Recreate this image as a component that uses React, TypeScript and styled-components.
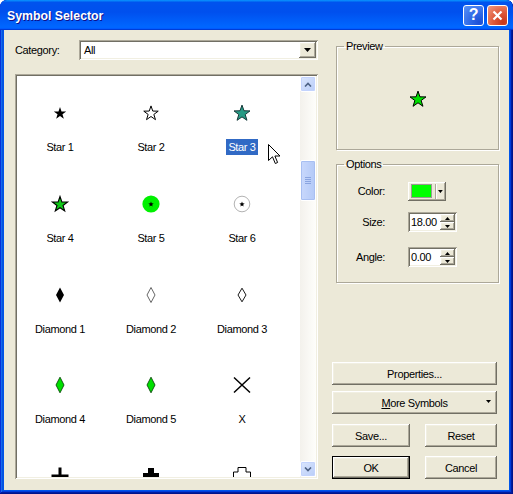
import React from 'react';
import styled, { createGlobalStyle, css } from 'styled-components';

const GlobalStyle = createGlobalStyle`
    html, body {
        margin: 0;
        padding: 0;
        background: #ffffff;
    }
    body {
        font-family: "Liberation Sans", Arial, sans-serif;
        font-size: 11px;
        letter-spacing: -0.35px;
        color: #000;
    }
`;

// classic 3D borders used by the controls inside the dialog
const raised = css`
    background: #ece9d8;
    border: none;
    box-shadow: inset -1px -1px #716f64, inset 1px 1px #ffffff, inset -2px -2px #aca899, inset 2px 2px #f1efe2;
`;

const sunken = css`
    background: #ffffff;
    box-shadow: inset 1px 1px #aca899, inset -1px -1px #ffffff, inset 2px 2px #716f64, inset -2px -2px #f1efe2;
`;

const Window = styled.div`
    width: 513px;
    height: 494px;
    box-sizing: border-box;
    display: flex;
    flex-direction: column;
    background: #0055ea;
    border-radius: 7px 7px 0 0;
    overflow: hidden;
    box-shadow: inset -1px -1px #00138c, inset 1px 1px #0831d9, inset -2px -2px #001ea0, inset 2px 2px #166aee,
        inset -3px -3px #003bda, inset 3px 3px #0855dd;
`;

const TitleBar = styled.div`
    height: 30px;
    flex: none;
    display: flex;
    align-items: center;
    padding: 0 5px 0 7px;
    box-sizing: border-box;
    background: linear-gradient(
        180deg,
        #0997ff,
        #0053ee 8%,
        #0050ee 40%,
        #0066ff 88%,
        #0066ff 93%,
        #005bff 95%,
        #003dd7 96%,
        #003dd7
    );
    border-radius: 7px 7px 0 0;
`;

const TitleText = styled.div`
    flex: 1;
    color: #ffffff;
    font-weight: bold;
    font-size: 12.3px;
    letter-spacing: 0;
    padding-top: 2px;
    text-shadow: 1px 1px #0f1089;
`;

const TitleButton = styled.div<{ $variant: 'help' | 'close' }>`
    width: 21px;
    height: 21px;
    box-sizing: border-box;
    margin-left: 3px;
    border: 1px solid #ffffff;
    border-radius: 3px;
    display: flex;
    align-items: center;
    justify-content: center;
    color: #ffffff;
    font-weight: bold;
    font-size: 16px;
    ${(props) =>
        props.$variant === 'help'
            ? css`
                  background: radial-gradient(circle at 80% 85%, #1d4fd6 0, #2e68e6 40%, #5b93f7 100%);
              `
            : css`
                  background: radial-gradient(circle at 80% 85%, #c8371b 0, #df5a3b 45%, #f09b80 100%);
              `}
`;

const Body = styled.div`
    flex: 1;
    margin: 0 4px 4px;
    background: #ece9d8;
    display: flex;
    padding: 10px 10px 11px 11px;
    box-sizing: border-box;
`;

const LeftColumn = styled.div`
    width: 303px;
    display: flex;
    flex-direction: column;
`;

const CategoryRow = styled.div`
    height: 20px;
    display: flex;
    align-items: center;
`;

const CategoryLabel = styled.div`
    width: 64px;
`;

const Combo = styled.div`
    ${sunken};
    flex: 1;
    height: 20px;
    display: flex;
    align-items: center;
    padding: 2px 2px 2px 5px;
    box-sizing: border-box;
`;

const ComboText = styled.div`
    flex: 1;
`;

const ComboButton = styled.div`
    ${raised};
    width: 17px;
    height: 16px;
    display: flex;
    align-items: center;
    justify-content: center;
`;

const ListBox = styled.div`
    ${sunken};
    position: relative;
    margin-top: 14px;
    height: 405px;
    padding: 2px;
    box-sizing: border-box;
    display: flex;
`;

const SymbolGrid = styled.div`
    flex: 1;
    overflow: hidden;
    display: grid;
    grid-template-columns: repeat(3, 86px);
    column-gap: 5px;
    grid-auto-rows: 90.75px;
    align-content: start;
`;

const SymbolCell = styled.div`
    display: flex;
    flex-direction: column;
    align-items: center;
    padding-top: 22px;
    box-sizing: border-box;
`;

const SymbolLabel = styled.div<{ $selected?: boolean }>`
    margin-top: 12px;
    line-height: 14px;
    padding: 0 2px;
    white-space: nowrap;
    ${(props) =>
        props.$selected &&
        css`
            background: #316ac5;
            color: #ffffff;
            padding: 1px 2px;
            margin-top: 11px;
        `}
`;

const ScrollBar = styled.div`
    width: 16px;
    display: flex;
    flex-direction: column;
    background: linear-gradient(90deg, #f3f1ec, #fefefb);
`;

const ScrollArrow = styled.div`
    height: 16px;
    box-sizing: border-box;
    border: 1px solid #ffffff;
    border-radius: 2px;
    background: linear-gradient(135deg, #dbe6fd, #b9cdf8);
    box-shadow: inset 0 0 0 1px #c3d3fd;
    display: flex;
    align-items: center;
    justify-content: center;
`;

const ScrollThumb = styled.div`
    margin-top: 68px;
    height: 41px;
    box-sizing: border-box;
    border: 1px solid #ffffff;
    border-radius: 2px;
    background: linear-gradient(90deg, #c9d8fc, #b3c9f7);
    box-shadow: inset 0 0 0 1px #a8bff2;
    display: flex;
    align-items: center;
    justify-content: center;
`;

const ScrollSpace = styled.div`
    flex: 1;
`;

const Cursor = styled.svg`
    position: absolute;
    left: 253px;
    top: 70px;
`;

const RightColumn = styled.div`
    width: 167px;
    margin-left: 14px;
    display: flex;
    flex-direction: column;
`;

const GroupBox = styled.fieldset<{ $height: number; $top?: number }>`
    margin: ${(props) => props.$top || 0}px 0 0 4px;
    padding: 0;
    height: ${(props) => props.$height}px;
    box-sizing: border-box;
    border: 1px solid #aca899;
    box-shadow: inset 1px 1px #ffffff, 1px 1px #ffffff;
    min-width: 0;
`;

const Legend = styled.legend`
    margin-left: 7px;
    padding: 0 2px;
    line-height: 13px;
    font-size: 11px;
`;

const PreviewArea = styled.div`
    height: 92px;
    display: flex;
    align-items: center;
    justify-content: center;
`;

const OptionRow = styled.div<{ $top: number }>`
    display: flex;
    align-items: center;
    height: 20px;
    margin-top: ${(props) => props.$top}px;
`;

const OptionLabel = styled.div`
    width: 48px;
    margin-right: 23px;
    text-align: right;
`;

const ColorButton = styled.div`
    ${raised};
    width: 38px;
    height: 19px;
    display: flex;
    align-items: center;
    padding: 0 3px 0 4px;
    box-sizing: border-box;
`;

const Swatch = styled.div`
    width: 20px;
    height: 12px;
    background: #00ff00;
    box-shadow: 0 0 0 1px #9a9a92;
`;

const SwatchDivider = styled.div`
    width: 1px;
    height: 15px;
    margin: 0 2px 0 4px;
    background: #aca899;
    box-shadow: 1px 0 #ffffff;
`;

const Spinner = styled.div`
    ${sunken};
    width: 49px;
    height: 20px;
    display: flex;
    align-items: center;
    padding: 2px;
    box-sizing: border-box;
`;

const SpinText = styled.div`
    flex: 1;
    padding-left: 1px;
`;

const SpinButtons = styled.div`
    width: 15px;
    height: 16px;
    display: flex;
    flex-direction: column;
`;

const SpinHalf = styled.div`
    ${raised};
    flex: 1;
    display: flex;
    align-items: center;
    justify-content: center;
`;

const Spacer = styled.div`
    flex: 1;
`;

const Button = styled.div<{ $width?: number; $top?: number; $default?: boolean }>`
    ${raised};
    width: ${(props) => (props.$width ? `${props.$width}px` : '165px')};
    height: 23px;
    margin-top: ${(props) => props.$top || 0}px;
    box-sizing: border-box;
    display: flex;
    align-items: center;
    justify-content: center;
    position: relative;
    ${(props) =>
        props.$default &&
        css`
            box-shadow: inset 0 0 0 1px #000000, inset -2px -2px #716f64, inset 2px 2px #ffffff,
                inset -3px -3px #aca899, inset 3px 3px #f1efe2;
        `}
`;

const ButtonArrow = styled.svg`
    position: absolute;
    right: 6px;
    top: 9px;
`;

const ButtonRow = styled.div<{ $top: number }>`
    display: flex;
    justify-content: space-between;
    width: 165px;
    margin-top: ${(props) => props.$top}px;
`;

function starPoints(cx: number, cy: number, R: number, r: number) {
    const pts: string[] = [];
    for (let i = 0; i < 10; i++) {
        const a = ((-90 + i * 36) * Math.PI) / 180;
        const rad = i % 2 === 0 ? R : r;
        pts.push(`${(cx + rad * Math.cos(a)).toFixed(2)},${(cy + rad * Math.sin(a)).toFixed(2)}`);
    }
    return pts.join(' ');
}

function diamond(hw: number, hh: number) {
    return `15,${15 - hh} ${15 + hw},15 15,${15 + hh} ${15 - hw},15`;
}

function cross(arm: number, half: number) {
    const a = arm / 2;
    return [
        [15 - a, 15 - half],
        [15 + a, 15 - half],
        [15 + a, 15 - a],
        [15 + half, 15 - a],
        [15 + half, 15 + a],
        [15 + a, 15 + a],
        [15 + a, 15 + half],
        [15 - a, 15 + half],
        [15 - a, 15 + a],
        [15 - half, 15 + a],
        [15 - half, 15 - a],
        [15 - a, 15 - a],
    ]
        .map((p) => p.join(','))
        .join(' ');
}

function Glyph({ kind }: { kind: string }) {
    let content: React.ReactNode = null;
    switch (kind) {
        case 'star1':
            content = <polygon points={starPoints(15, 15.5, 6.5, 2.6)} fill="#000" />;
            break;
        case 'star2':
            content = <polygon points={starPoints(15, 15.5, 7.6, 3)} fill="#fff" stroke="#000" strokeWidth="1" />;
            break;
        case 'star3':
            content = <polygon points={starPoints(15, 15.5, 8.4, 3.4)} fill="#279b85" stroke="#173a3a" strokeWidth="1" />;
            break;
        case 'star4':
            content = <polygon points={starPoints(15, 15.5, 8, 3.2)} fill="#10c818" stroke="#000" strokeWidth="1.1" />;
            break;
        case 'star5':
            content = (
                <>
                    <circle cx="15" cy="15" r="8.6" fill="#00f000" />
                    <polygon points={starPoints(15, 15.3, 2.8, 1.2)} fill="#000" />
                </>
            );
            break;
        case 'star6':
            content = (
                <>
                    <circle cx="15" cy="15" r="7.8" fill="#fff" stroke="#a0a0a0" strokeWidth="0.8" />
                    <polygon points={starPoints(15, 15.3, 2.8, 1.2)} fill="#000" />
                </>
            );
            break;
        case 'diamond1':
            content = <polygon points={diamond(4, 7.5)} fill="#000" />;
            break;
        case 'diamond2':
            content = <polygon points={diamond(4, 7.5)} fill="#fff" stroke="#555" strokeWidth="0.9" />;
            break;
        case 'diamond3':
            content = <polygon points={diamond(4, 6.8)} fill="#fff" stroke="#000" strokeWidth="0.9" />;
            break;
        case 'diamond4':
        case 'diamond5':
            content = <polygon points={diamond(4, 7.8)} fill="#00e000" stroke="#0b4a0b" strokeWidth="0.9" />;
            break;
        case 'x':
            content = (
                <path d="M7 7.5 L23 22.5 M23 7.5 L7 22.5" stroke="#000" strokeWidth="1.5" fill="none" />
            );
            break;
        case 'cross1':
            content = <polygon points={cross(3, 8.5)} fill="#000" />;
            break;
        case 'cross2':
            content = <polygon points={cross(6, 8)} fill="#000" />;
            break;
        case 'cross3':
            content = <polygon points={cross(8, 8.5)} fill="#fff" stroke="#000" strokeWidth="1" />;
            break;
    }
    return (
        <svg width="30" height="30" viewBox="0 0 30 30">
            {content}
        </svg>
    );
}

// the last row is scrolled out of view, so its names are not shown
const symbols: { name?: string; kind: string; selected?: boolean }[] = [
    { name: 'Star 1', kind: 'star1' },
    { name: 'Star 2', kind: 'star2' },
    { name: 'Star 3', kind: 'star3', selected: true },
    { name: 'Star 4', kind: 'star4' },
    { name: 'Star 5', kind: 'star5' },
    { name: 'Star 6', kind: 'star6' },
    { name: 'Diamond 1', kind: 'diamond1' },
    { name: 'Diamond 2', kind: 'diamond2' },
    { name: 'Diamond 3', kind: 'diamond3' },
    { name: 'Diamond 4', kind: 'diamond4' },
    { name: 'Diamond 5', kind: 'diamond5' },
    { name: 'X', kind: 'x' },
    { kind: 'cross1' },
    { kind: 'cross2' },
    { kind: 'cross3' },
];

const DownTriangle = ({ w = 7 }: { w?: number }) => (
    <svg width={w} height={Math.ceil(w / 2)} viewBox={`0 0 ${w} ${Math.ceil(w / 2)}`}>
        <polygon points={`0,0 ${w},0 ${w / 2},${Math.ceil(w / 2)}`} fill="#000" />
    </svg>
);

const UpTriangle = ({ w = 5 }: { w?: number }) => (
    <svg width={w} height={Math.ceil(w / 2)} viewBox={`0 0 ${w} ${Math.ceil(w / 2)}`}>
        <polygon points={`0,${Math.ceil(w / 2)} ${w},${Math.ceil(w / 2)} ${w / 2},0`} fill="#000" />
    </svg>
);

function SpinBox({ value }: { value: string }) {
    return (
        <Spinner>
            <SpinText>{value}</SpinText>
            <SpinButtons>
                <SpinHalf>
                    <UpTriangle />
                </SpinHalf>
                <SpinHalf>
                    <DownTriangle w={5} />
                </SpinHalf>
            </SpinButtons>
        </Spinner>
    );
}

function App() {
    return (
        <>
            <GlobalStyle />
            <Window>
                <TitleBar>
                    <TitleText>Symbol Selector</TitleText>
                    <TitleButton $variant="help">?</TitleButton>
                    <TitleButton $variant="close">
                        <svg width="11" height="11" viewBox="0 0 11 11">
                            <path d="M1.5 1.5 L9.5 9.5 M9.5 1.5 L1.5 9.5" stroke="#fff" strokeWidth="2.2" />
                        </svg>
                    </TitleButton>
                </TitleBar>
                <Body>
                    <LeftColumn>
                        <CategoryRow>
                            <CategoryLabel>Category:</CategoryLabel>
                            <Combo>
                                <ComboText>All</ComboText>
                                <ComboButton>
                                    <DownTriangle />
                                </ComboButton>
                            </Combo>
                        </CategoryRow>
                        <ListBox>
                            <SymbolGrid>
                                {symbols.map((s) => (
                                    <SymbolCell key={s.kind}>
                                        <Glyph kind={s.kind} />
                                        {s.name && <SymbolLabel $selected={s.selected}>{s.name}</SymbolLabel>}
                                    </SymbolCell>
                                ))}
                            </SymbolGrid>
                            <ScrollBar>
                                <ScrollArrow>
                                    <svg width="8" height="5" viewBox="0 0 8 5">
                                        <path d="M1 4.5 L4 1.5 L7 4.5" stroke="#4d6185" strokeWidth="1.6" fill="none" />
                                    </svg>
                                </ScrollArrow>
                                <ScrollThumb>
                                    <svg width="6" height="7" viewBox="0 0 6 7">
                                        <path d="M0 0.5 H6 M0 2.5 H6 M0 4.5 H6 M0 6.5 H6" stroke="#8aa4e0" strokeWidth="1" />
                                    </svg>
                                </ScrollThumb>
                                <ScrollSpace />
                                <ScrollArrow>
                                    <svg width="8" height="5" viewBox="0 0 8 5">
                                        <path d="M1 0.5 L4 3.5 L7 0.5" stroke="#4d6185" strokeWidth="1.6" fill="none" />
                                    </svg>
                                </ScrollArrow>
                            </ScrollBar>
                            <Cursor width="14" height="22" viewBox="0 0 14 22">
                                <path
                                    d="M0.5 0.5 L0.5 16.5 L4.5 12.8 L7.3 19.5 L9.6 18.5 L6.9 12 L12 12 Z"
                                    fill="#fff"
                                    stroke="#000"
                                    strokeWidth="1"
                                    strokeLinejoin="miter"
                                />
                            </Cursor>
                        </ListBox>
                    </LeftColumn>
                    <RightColumn>
                        <GroupBox $height={110}>
                            <Legend>Preview</Legend>
                            <PreviewArea>
                                <svg width="20" height="20" viewBox="0 0 20 20">
                                    <polygon points={starPoints(10, 10.5, 8.4, 3.3)} fill="#00e000" stroke="#000" strokeWidth="1" />
                                </svg>
                            </PreviewArea>
                        </GroupBox>
                        <GroupBox $height={125} $top={8}>
                            <Legend>Options</Legend>
                            <OptionRow $top={10}>
                                <OptionLabel>Color:</OptionLabel>
                                <ColorButton>
                                    <Swatch />
                                    <SwatchDivider />
                                    <DownTriangle w={5} />
                                </ColorButton>
                            </OptionRow>
                            <OptionRow $top={11}>
                                <OptionLabel>Size:</OptionLabel>
                                <SpinBox value="18.00" />
                            </OptionRow>
                            <OptionRow $top={15}>
                                <OptionLabel>Angle:</OptionLabel>
                                <SpinBox value="0.00" />
                            </OptionRow>
                        </GroupBox>
                        <Spacer />
                        <Button>Properties...</Button>
                        <Button $top={6}>
                            <span>
                                <u>M</u>ore Symbols
                            </span>
                            <ButtonArrow width="5" height="3" viewBox="0 0 5 3">
                                <polygon points="0,0 5,0 2.5,3" fill="#000" />
                            </ButtonArrow>
                        </Button>
                        <ButtonRow $top={10}>
                            <Button $width={78}>Save...</Button>
                            <Button $width={72}>Reset</Button>
                        </ButtonRow>
                        <ButtonRow $top={9}>
                            <Button $width={78} $default>
                                OK
                            </Button>
                            <Button $width={72}>Cancel</Button>
                        </ButtonRow>
                    </RightColumn>
                </Body>
            </Window>
        </>
    );
}

export default App;
